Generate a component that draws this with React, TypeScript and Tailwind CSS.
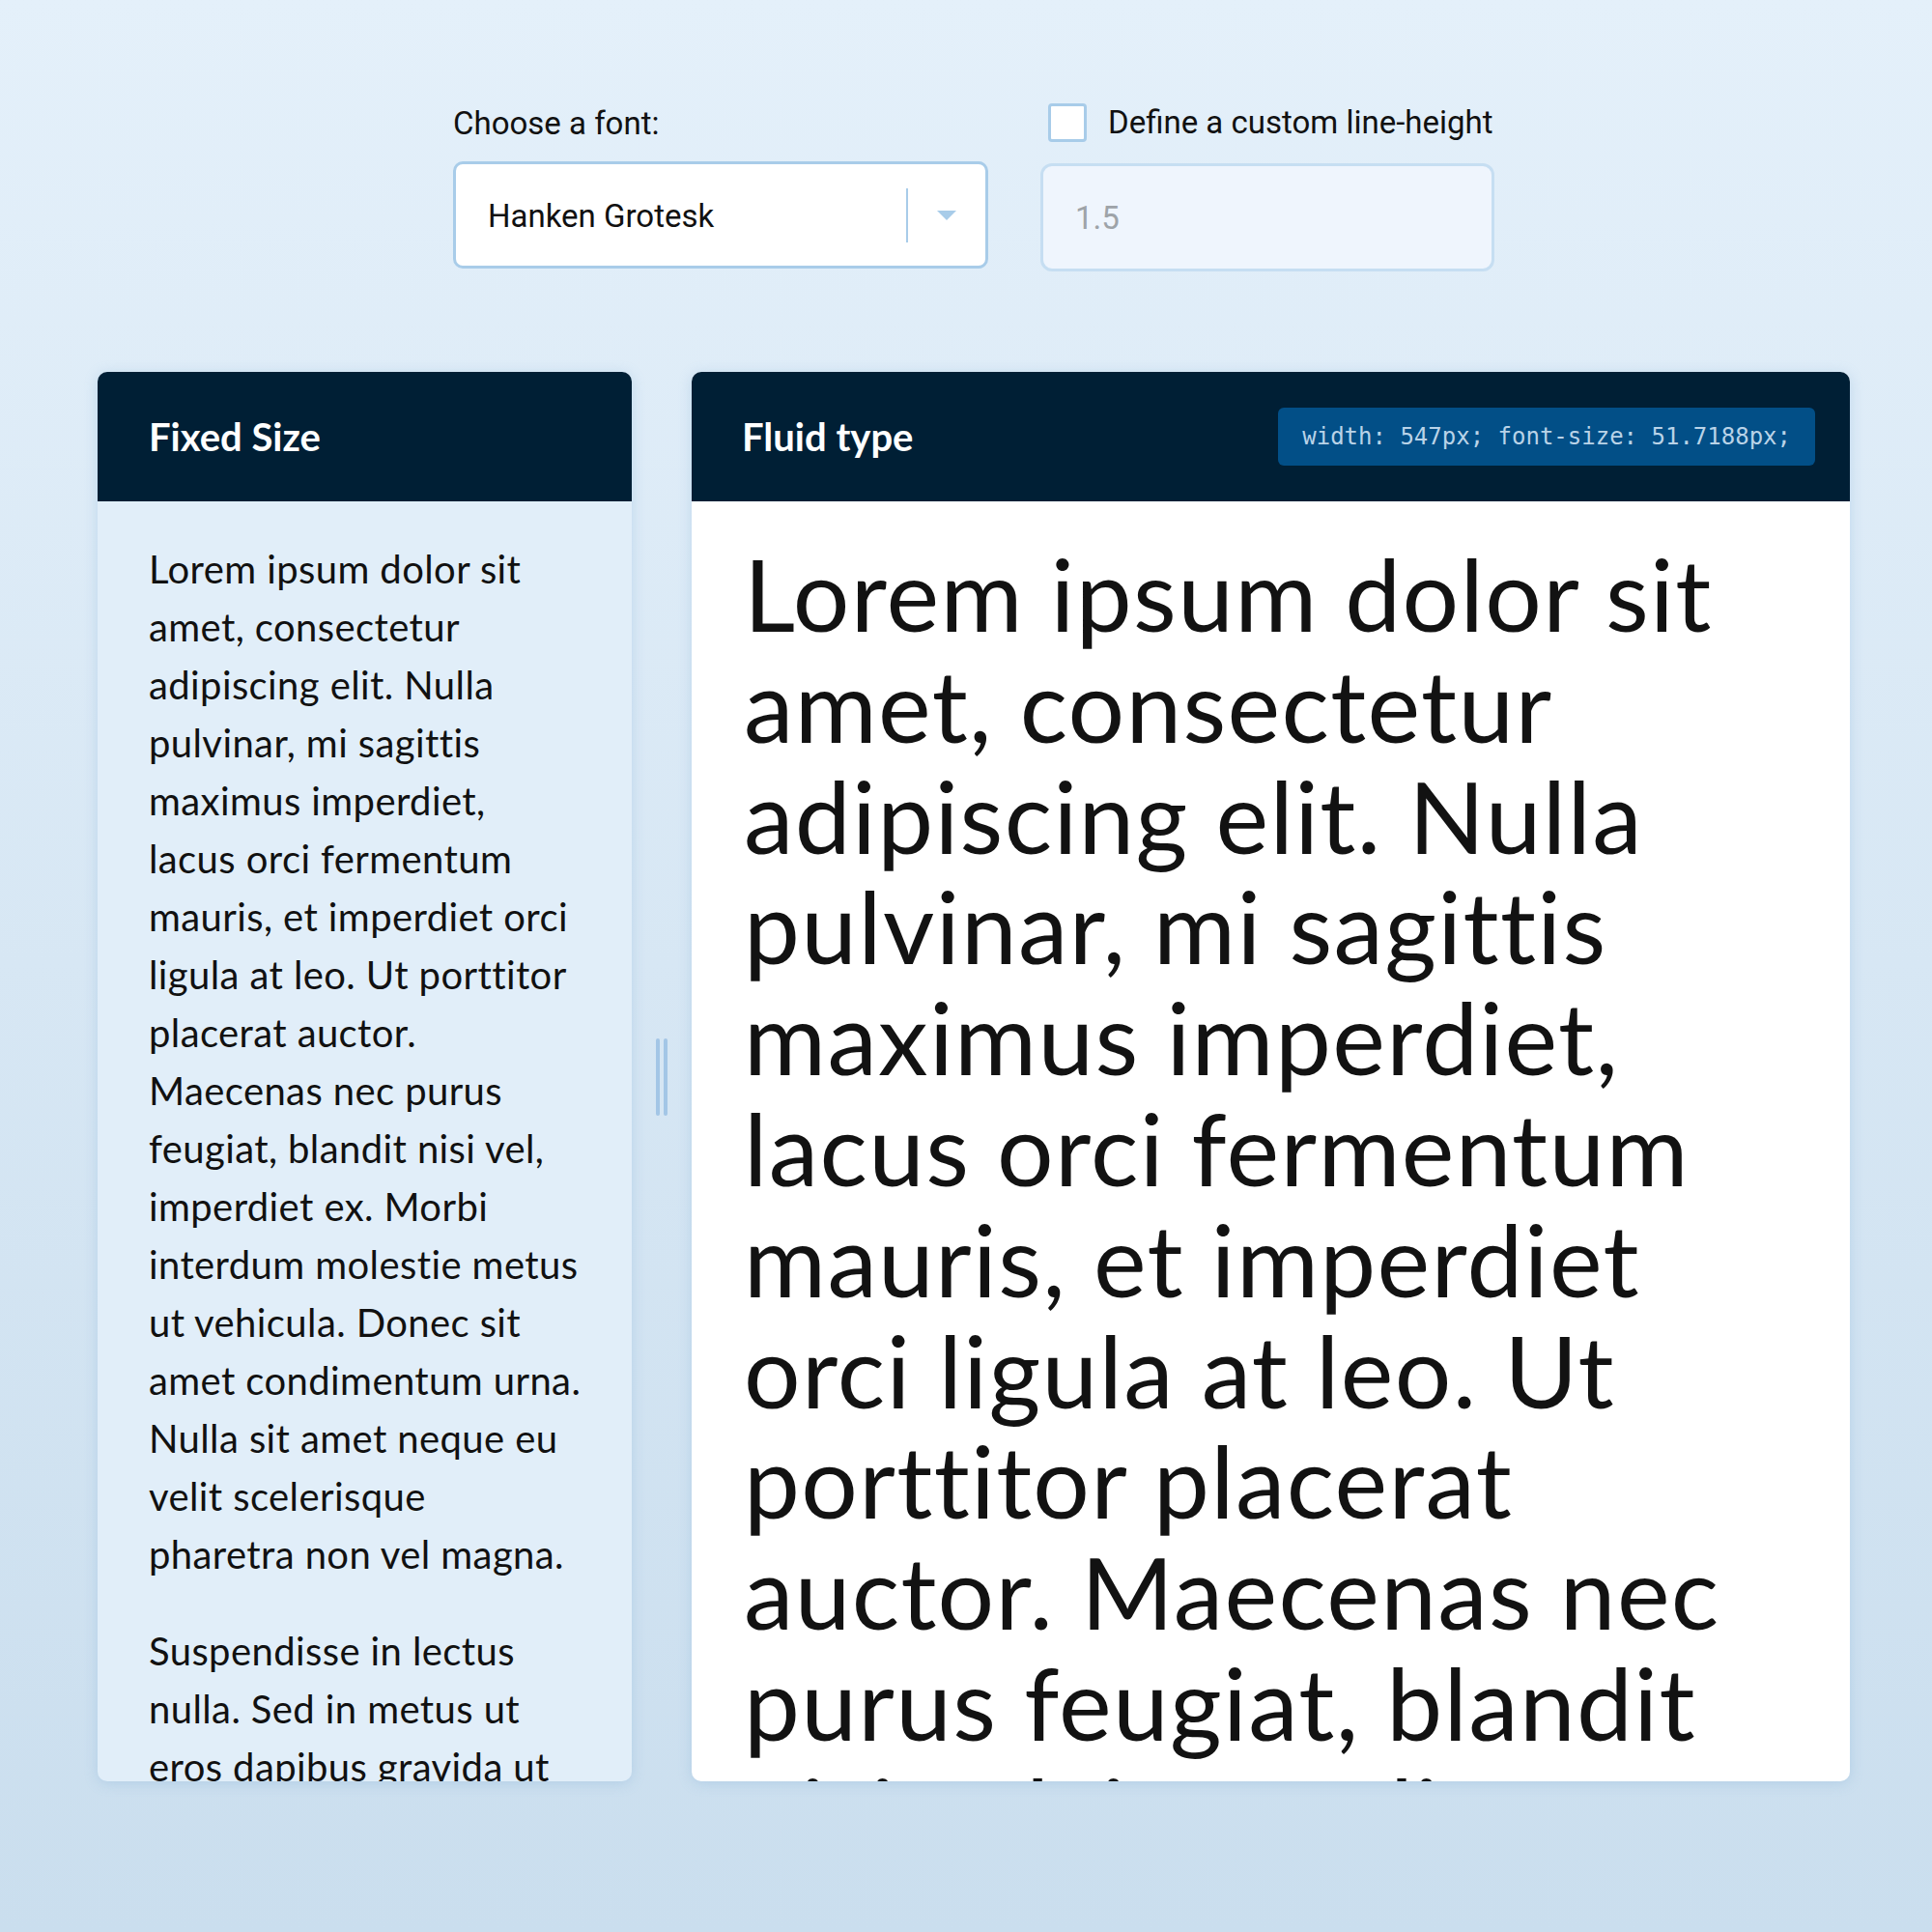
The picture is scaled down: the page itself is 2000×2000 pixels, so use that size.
import React, { useState } from 'react';

// sample copy, broken the way the two columns wrap it
const fixedLines = [
  [
    'Lorem ipsum dolor sit',
    'amet, consectetur',
    'adipiscing elit. Nulla',
    'pulvinar, mi sagittis',
    'maximus imperdiet,',
    'lacus orci fermentum',
    'mauris, et imperdiet orci',
    'ligula at leo. Ut porttitor',
    'placerat auctor.',
    'Maecenas nec purus',
    'feugiat, blandit nisi vel,',
    'imperdiet ex. Morbi',
    'interdum molestie metus',
    'ut vehicula. Donec sit',
    'amet condimentum urna.',
    'Nulla sit amet neque eu',
    'velit scelerisque',
    'pharetra non vel magna.',
  ],
  [
    'Suspendisse in lectus',
    'nulla. Sed in metus ut',
    'eros dapibus gravida ut',
    'vitae lorem. Integer',
    'tincidunt turpis at dapibus.',
  ],
];

const fluidLines = [
  'Lorem ipsum dolor sit',
  'amet, consectetur',
  'adipiscing elit. Nulla',
  'pulvinar, mi sagittis',
  'maximus imperdiet,',
  'lacus orci fermentum',
  'mauris, et imperdiet',
  'orci ligula at leo. Ut',
  'porttitor placerat',
  'auctor. Maecenas nec',
  'purus feugiat, blandit',
  'nisi vel, imperdiet ex.',
  'Morbi interdum molestie',
];

const App: React.FC = () => {
  const [font, setFont] = useState('Hanken Grotesk');
  const [customLh, setCustomLh] = useState(false);

  return (
    <div className="min-h-screen w-full bg-gradient-to-b from-[#e4f0fa] to-[#cadeee] pb-[156px] font-['Roboto',sans-serif]">
      {/* controls */}
      <div className="flex pl-[469px] pt-[107px] gap-[54px]">
        <div className="w-[554px]">
          <label className="block text-[33px] leading-[40px] text-[#111] mt-[1px]">Choose a font:</label>
          <div className="mt-[19px] h-[111px] rounded-[10px] border-[3px] border-[#a8cce9] bg-white flex items-center pl-[33px] pr-[30px]">
            <span className="flex-1 text-[33px] text-[#111] pt-[2px]">{font}</span>
            <span className="w-[2px] h-[56px] bg-[#a8cce9]" />
            <span
              className="ml-[30px] w-0 h-0 border-l-[10px] border-r-[10px] border-t-[10px] border-l-transparent border-r-transparent border-t-[#a8cce9]"
              onClick={() => setFont('Hanken Grotesk')}
            />
          </div>
        </div>
        <div className="w-[470px]">
          <label className="flex items-center gap-[22px] pl-[8px] cursor-pointer">
            <span
              className="w-[40px] h-[40px] rounded-[4px] border-[3px] border-[#a8cce9] bg-white"
              onClick={() => setCustomLh(!customLh)}
            />
            <span className="text-[33px] leading-[40px] text-[#111]">Define a custom line-height</span>
          </label>
          <div className="mt-[22px] h-[112px] rounded-[12px] border-[3px] border-[#c6def2] bg-[#eff5fd] flex items-center pl-[33px]">
            <span className="text-[33px] text-[#9ea3a8] pt-[2px]">1.5</span>
          </div>
        </div>
      </div>

      {/* panels */}
      <div className="flex items-stretch pl-[101px] mt-[104px] h-[1459px] font-['Lato',sans-serif] [font-variant-ligatures:none]">
        <section className="w-[553px] flex flex-col rounded-[10px] overflow-hidden bg-[#e1eef9] shadow-[0_2px_14px_rgba(110,160,210,0.28)]">
          <header className="h-[134px] shrink-0 bg-[#001f35] flex items-center px-[53px]">
            <h2 className="text-white text-[40px] font-bold">Fixed Size</h2>
          </header>
          <div className="flex-1 overflow-hidden px-[53px] pt-[40px] text-[40px] leading-[60px] tracking-[0.01em] text-[#111]">
            {fixedLines.map((para, i) => (
              <p key={i} className="mb-[40px]">
                {para.map((line) => (
                  <span key={line} className="block whitespace-nowrap">{line}</span>
                ))}
              </p>
            ))}
          </div>
        </section>

        {/* drag handle */}
        <div className="w-[62px] flex items-center justify-center">
          <div className="flex gap-[4px]">
            <span className="w-[4px] h-[80px] bg-[#a3c6e6] rounded-full" />
            <span className="w-[4px] h-[80px] bg-[#a3c6e6] rounded-full" />
          </div>
        </div>

        <section className="w-[1199px] flex flex-col rounded-[10px] overflow-hidden bg-white shadow-[0_2px_14px_rgba(110,160,210,0.28)]">
          <header className="h-[134px] shrink-0 bg-[#001f35] flex items-center justify-between pl-[52px] pr-[36px]">
            <h2 className="text-white text-[40px] font-bold">Fluid type</h2>
            <code className="h-[60px] px-[25px] rounded-[6px] bg-[#024f87] text-[#b9d3e8] text-[24px] font-['DejaVu_Sans_Mono',monospace] flex items-center">
              width: 547px; font-size: 51.7188px;
            </code>
          </header>
          <div className="flex-1 overflow-hidden px-[54px] pt-[38px] text-[103.4px] leading-[114.8px] tracking-[0.013em] text-[#121212]">
            <p>
              {fluidLines.map((line) => (
                <span key={line} className="block whitespace-nowrap">{line}</span>
              ))}
            </p>
          </div>
        </section>
      </div>
    </div>
  );
};

export default App;
